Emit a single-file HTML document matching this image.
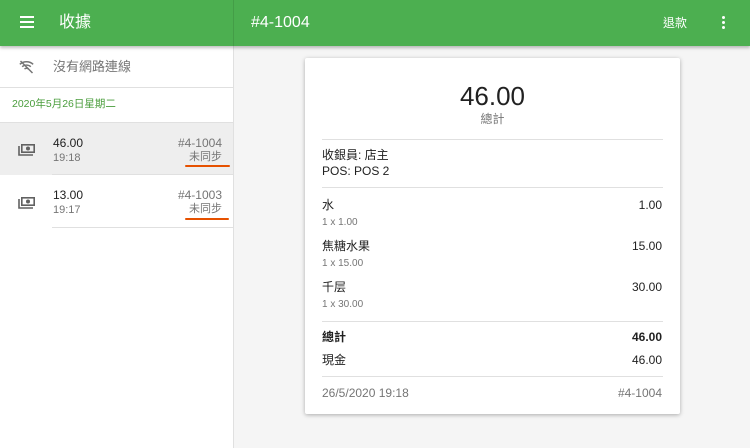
<!DOCTYPE html>
<html><head><meta charset="utf-8"><style>
*{margin:0;padding:0;box-sizing:border-box}
body{width:750px;height:448px;overflow:hidden;background:#f5f5f5;font-family:"Liberation Sans","Noto Sans CJK TC",sans-serif;position:relative;color:#212121}
.hdr{position:absolute;left:0;top:0;width:750px;height:46px;background:#4caf50;box-shadow:0 2px 3px rgba(0,0,0,.25);z-index:2;color:#fff}
.abs{position:absolute}
.left{position:absolute;left:0;top:46px;width:234px;height:402px;background:#fff;border-right:1px solid #e0e0e0}
.t{position:absolute;white-space:nowrap;line-height:1}
.card{position:absolute;left:305px;top:58px;width:375px;height:356px;background:#fff;box-shadow:0 1px 4px rgba(0,0,0,.3);border-radius:2px}
.hr{position:absolute;left:17px;right:17px;height:1px;background:#e0e0e0}
.r{right:18px;text-align:right}
</style></head><body>
<div class="hdr">
  <div class="abs" style="left:20px;top:16px;width:14px;height:2px;background:#fff;box-shadow:0 5px 0 #fff,0 10px 0 #fff"></div>
  <div class="t" style="left:59px;top:15px;font-size:16px">收據</div>
  <div class="abs" style="left:233px;top:0;width:1px;height:46px;background:rgba(0,0,0,.1)"></div>
  <div class="t" style="left:251px;top:15px;font-size:16px">#4-1004</div>
  <div class="t" style="left:663px;top:17px;font-size:12px">退款</div>
  <div class="abs" style="left:722px;top:16px;width:3px;height:3px;background:#fff;border-radius:50%;box-shadow:0 5px 0 #fff,0 10px 0 #fff"></div>
</div>
<div class="left">
  <svg class="abs" style="left:18px;top:13px" width="17" height="16" viewBox="0 0 24 24"><path d="M2 8a15 15 0 0 1 20 0M5.5 11.5a10 10 0 0 1 13 0M9 15a5 5 0 0 1 6 0" stroke="#757575" stroke-width="2.2" fill="none"/><path d="M3 3l18 18" stroke="#757575" stroke-width="2.2"/></svg>
  <div class="t" style="left:53px;top:14px;font-size:13px;color:#757575">沒有網路連線</div>
  <div class="abs" style="left:0;top:41px;width:233px;height:1px;background:#e0e0e0"></div>
  <div class="t" style="left:12px;top:53px;font-size:10.5px;color:#4a9d3c">2020年5月26日星期二</div>
  <div class="abs" style="left:0;top:76px;width:233px;height:53px;background:#eeeeee;border-top:1px solid #e0e0e0"></div>
  <div class="abs" style="left:52px;top:128px;width:181px;height:1px;background:#e0e0e0"></div>
  <div class="abs" style="left:52px;top:181px;width:181px;height:1px;background:#e0e0e0"></div>
  <svg class="abs" style="left:18px;top:97px" width="18" height="14" viewBox="0 0 18 14"><rect x="3.8" y="1.8" width="12.4" height="7.4" fill="none" stroke="#616161" stroke-width="1.6"/><circle cx="10" cy="5.5" r="2" fill="#616161"/><path d="M1 3v9h14" stroke="#616161" stroke-width="1.6" fill="none"/></svg>
  <div class="t" style="left:53px;top:91px;font-size:12px">46.00</div>
  <div class="t" style="left:53px;top:107px;font-size:11px;color:#757575">19:18</div>
  <div class="t" style="right:11px;top:91px;font-size:12px;color:#757575">#4-1004</div>
  <div class="t" style="right:11px;top:106px;font-size:11px;color:#757575">未同步</div>
  <div class="abs" style="left:185px;top:119px;width:45px;height:2px;background:#e65100;border-radius:1px"></div>
  <svg class="abs" style="left:18px;top:150px" width="18" height="14" viewBox="0 0 18 14"><rect x="3.8" y="1.8" width="12.4" height="7.4" fill="none" stroke="#616161" stroke-width="1.6"/><circle cx="10" cy="5.5" r="2" fill="#616161"/><path d="M1 3v9h14" stroke="#616161" stroke-width="1.6" fill="none"/></svg>
  <div class="t" style="left:53px;top:143px;font-size:12px">13.00</div>
  <div class="t" style="left:53px;top:159px;font-size:11px;color:#757575">19:17</div>
  <div class="t" style="right:11px;top:143px;font-size:12px;color:#757575">#4-1003</div>
  <div class="t" style="right:11px;top:158px;font-size:11px;color:#757575">未同步</div>
  <div class="abs" style="left:185px;top:172px;width:44px;height:2px;background:#e65100;border-radius:1px"></div>
</div>
<div class="card">
  <div class="t" style="left:0;right:0;text-align:center;top:25px;font-size:26px">46.00</div>
  <div class="t" style="left:0;right:0;text-align:center;top:55px;font-size:12px;color:#757575">總計</div>
  <div class="hr" style="top:81px"></div>
  <div class="t" style="left:17px;top:91px;font-size:12px">收銀員: 店主</div>
  <div class="t" style="left:17px;top:107px;font-size:12px">POS: POS 2</div>
  <div class="hr" style="top:129px"></div>
  <div class="t" style="left:17px;top:141px;font-size:12px">水</div><div class="t r" style="top:141px;font-size:12px">1.00</div>
  <div class="t" style="left:17px;top:160px;font-size:10px;color:#757575">1 x 1.00</div>
  <div class="t" style="left:17px;top:182px;font-size:12px">焦糖水果</div><div class="t r" style="top:182px;font-size:12px">15.00</div>
  <div class="t" style="left:17px;top:201px;font-size:10px;color:#757575">1 x 15.00</div>
  <div class="t" style="left:17px;top:223px;font-size:12px">千层</div><div class="t r" style="top:223px;font-size:12px">30.00</div>
  <div class="t" style="left:17px;top:242px;font-size:10px;color:#757575">1 x 30.00</div>
  <div class="hr" style="top:263px"></div>
  <div class="t" style="left:17px;top:273px;font-size:12px;font-weight:bold">總計</div><div class="t r" style="top:273px;font-size:12px;font-weight:bold">46.00</div>
  <div class="t" style="left:17px;top:296px;font-size:12px">現金</div><div class="t r" style="top:296px;font-size:12px">46.00</div>
  <div class="hr" style="top:318px"></div>
  <div class="t" style="left:17px;top:329px;font-size:12px;color:#757575">26/5/2020 19:18</div><div class="t r" style="top:329px;font-size:12px;color:#757575">#4-1004</div>
</div>
</body></html>
